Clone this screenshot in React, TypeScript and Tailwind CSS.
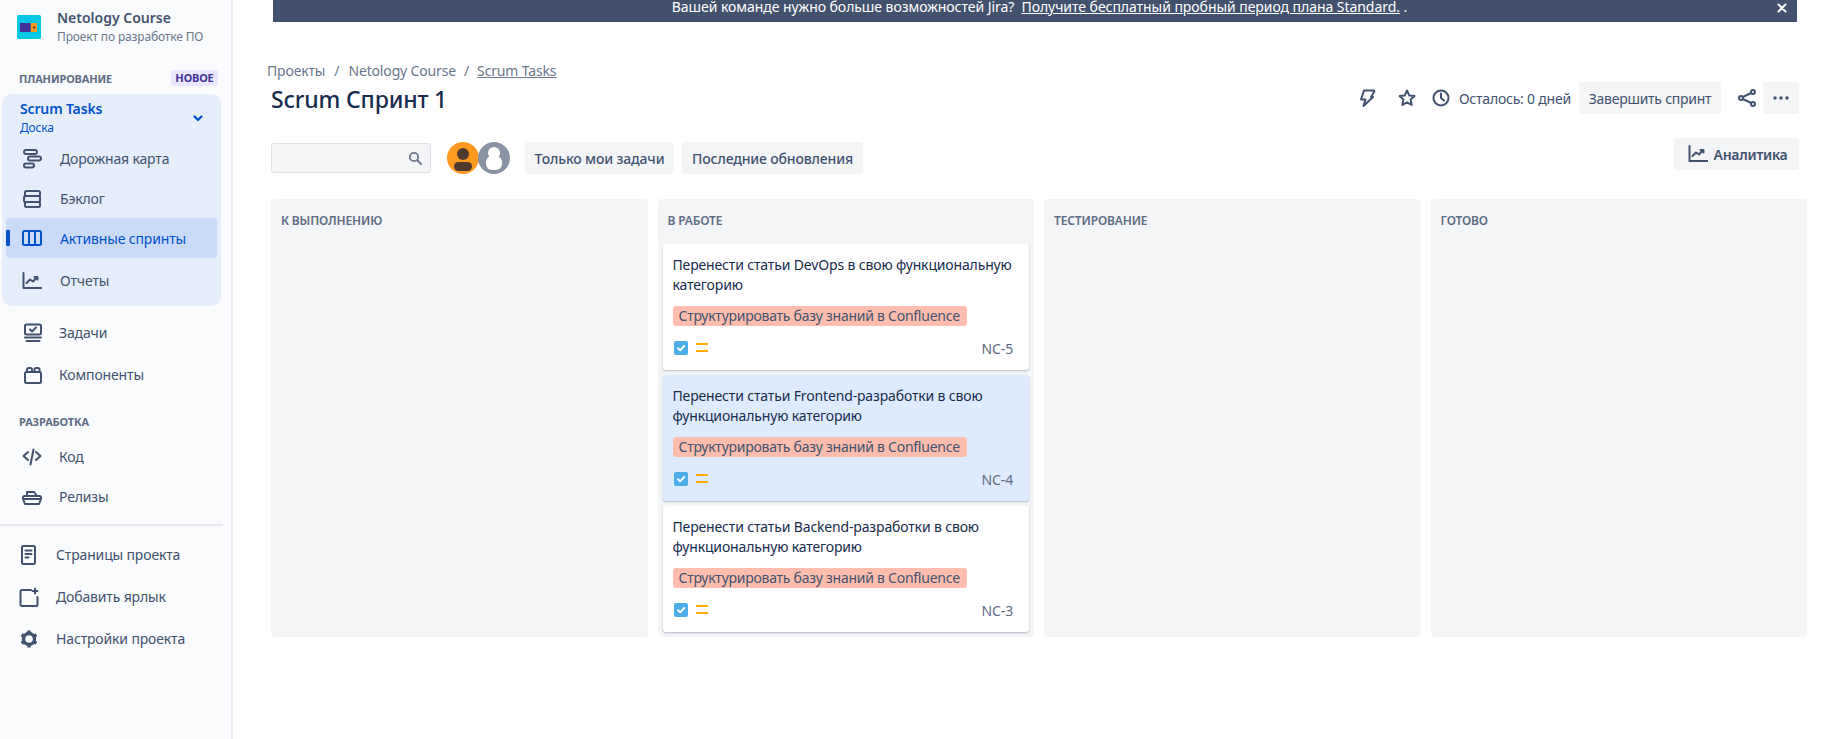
import React from "react";

const S = { fill: "none", stroke: "currentColor", strokeWidth: 2, strokeLinecap: "round" as const, strokeLinejoin: "round" as const };
const Ic = ({ children, className = "" }: { children: React.ReactNode; className?: string }) => (
  <svg viewBox="0 0 20 20" className={"w-5 h-5 shrink-0 " + className} {...S}>{children}</svg>
);
const Roadmap = () => <Ic><rect x="2" y="1" width="13" height="4" rx="2"/><rect x="6" y="7.500" width="13" height="4" rx="2"/><rect x="2" y="14.500" width="10" height="4" rx="2"/></Ic>;
const Backlog = () => <Ic><rect x="3" y="2" width="15" height="5" rx="1.500"/><rect x="2" y="7" width="16" height="6" rx="1.500"/><rect x="3" y="13" width="15" height="5" rx="1.500"/></Ic>;
const Board = () => <Ic><rect x="1" y="3" width="18" height="14" rx="1.500"/><path d="M7 3v14M13 3v14"/></Ic>;
const Chart = () => <Ic><path d="M1.500 2v15h18"/><path d="M4.500 12l3.500-3.500 3 2 4-4.500M12.500 6h3v2.500"/></Ic>;
const Tasks = () => <Ic><rect x="2" y="1.500" width="16" height="10" rx="1.500"/><path d="M7 6.500l2 2 4-4M2 14.500h16M3.500 18h13"/></Ic>;
const Comps = () => <Ic><rect x="2" y="7" width="16" height="11" rx="1.500"/><path d="M4 7V4.500A1.500 1.500 0 0 1 5.500 3h2A1.500 1.500 0 0 1 9 4.500V7M11.500 7V4.500A1.500 1.500 0 0 1 13 3h2a1.500 1.500 0 0 1 1.500 1.500V7"/></Ic>;
const Code = () => <Ic><path d="M6 5L1.500 9l4.500 4M14 5l4.500 4-4.500 4M11.500 2.500l-3 15"/></Ic>;
const Ship = () => <Ic><path d="M1 12h18l-2 5H3zM1 12v-1.500A1.500 1.500 0 0 1 2.500 9h15a1.500 1.500 0 0 1 1.500 1.500V12M5 9V5h7l3 4"/></Ic>;
const Page = () => <Ic><rect x="3" y="1" width="13" height="18" rx="1.500"/><path d="M6.500 5.500h6M6.500 9h6M6.500 12.500h3"/></Ic>;
const AddLink = () => <Ic><path d="M12 3H3a1.500 1.500 0 0 0-1.500 1.500v13A1.500 1.500 0 0 0 3 19h14a1.500 1.500 0 0 0 1.500-1.500V10M16 1.500v5M13.500 4h5"/></Ic>;
const Gear = () => (
  <svg viewBox="0 0 20 20" className="w-5 h-5 shrink-0" fill="none" stroke="currentColor" strokeWidth={3.4} strokeLinejoin="round">
    <circle cx="10" cy="10" r="5.500"/><path d="M10 1.500v3M10 15.500v3M2.600 5.700l2.600 1.500M14.800 12.800l2.600 1.500M2.600 14.300l2.600-1.500M14.800 7.200l2.600-1.500"/>
  </svg>
);
const Bolt = () => <Ic><path d="M7 2.500h9.500c.8 0 1 .6.700 1.300L14 9h2l-9.500 9 2-6.500H4z"/></Ic>;
const Star = () => <Ic><path d="M10 2.500l2.300 5 5.200.6-3.900 3.500 1.100 5.400L10 14.300 5.300 17l1.100-5.400L2.500 8.100l5.200-.6z"/></Ic>;
const Clock = () => <Ic><circle cx="10" cy="10" r="7.500"/><path d="M10 5.500V10l3 2.500"/></Ic>;
const Share = () => <Ic><circle cx="16" cy="4" r="2"/><circle cx="16" cy="16" r="2"/><circle cx="4" cy="10" r="2"/><path d="M14.200 5L5.800 9M14.200 15L5.800 11"/></Ic>;

const Row = ({ icon, label, h, gap, color = "text-[#42526e]", bg = "", mark = false, cls = "", pb = "pb-[2px]" }: any) => (
  <div className={`relative flex items-center ${h} ${gap} ${color} ${bg} ${cls} rounded-[4px]`}>
    {mark && <span className="absolute left-0 top-[12px] h-[16px] w-[4px] bg-[#0052cc] rounded-[1px]" />}
    {icon}
    <span className={`text-[14px] whitespace-nowrap ${pb}`}>{label}</span>
  </div>
);

const Sidebar = () => (
  <aside className="w-[233px] shrink-0 h-full bg-[#fafbfc] border-r-2 border-[#ebecf0] text-[#42526e]">
    <div className="flex items-start h-[66px] pl-[17px] gap-[16px]">
      <div className="mt-[15px] w-6 h-6 rounded-[2px] bg-[#00c7e6] flex items-center justify-center">
        <svg viewBox="0 0 20 10" className="w-[18px] h-[9px]">
          <rect width="12" height="10" fill="#403294" />
          <rect x="12" width="7" height="10" fill="#ff991f" />
          <path d="M14.500 5h2.500M15.750 3.700v2.600" stroke="#172b4d" strokeWidth="1" />
        </svg>
      </div>
      <div className="mt-[8px]">
        <div className="text-[14px] leading-[20px] font-semibold whitespace-nowrap tracking-normal">Netology Course</div>
        <div className="text-[12px] leading-[16px] mt-[1px] text-[#6b778c] whitespace-nowrap">Проект по разработке ПО</div>
      </div>
    </div>
    <div className="flex items-center justify-between h-[24px] pl-[19px] pr-[13px]">
      <span className="text-[11px] font-bold text-[#5e6c84] pt-[3px]">ПЛАНИРОВАНИЕ</span>
      <span className="h-[16px] w-[47px] flex items-center justify-center rounded-[3px] bg-[#eae6ff] text-[#403294] text-[11px] font-bold">НОВОЕ</span>
    </div>
    <div className="mt-[4px] ml-[2px] w-[219px] h-[212px] rounded-[10px] bg-[#e6eefb] px-[4px]">
      <div className="flex items-center justify-between h-[45px] pl-[14px] pr-[13px]">
        <div className="pt-[3px]">
          <div className="text-[14px] leading-[18px] font-semibold text-[#0052cc]">Scrum Tasks</div>
          <div className="text-[12px] leading-[16px] mt-[2px] text-[#0052cc]">Доска</div>
        </div>
        <svg viewBox="0 0 12 12" className="w-3 h-3 text-[#0052cc] mt-[3px]" fill="none" stroke="currentColor" strokeWidth="2.200" strokeLinecap="round" strokeLinejoin="round"><path d="M2.500 4.500L6 8l3.500-3.500"/></svg>
      </div>
      <Row icon={<Roadmap />} label="Дорожная карта" h="h-[40px]" gap="gap-[18px]" cls="pl-[16px]" />
      <Row icon={<Backlog />} label="Бэклог" h="h-[39px]" gap="gap-[18px]" cls="pl-[16px]" pb="pb-0" />
      <Row icon={<Board />} label="Активные спринты" h="h-[40px]" gap="gap-[18px]" color="text-[#0052cc]" bg="bg-[#c9dbf8]" mark cls="pl-[16px]" pb="pb-0" />
      <Row icon={<Chart />} label="Отчеты" h="h-[40px]" gap="gap-[18px]" cls="pl-[16px] mt-[3px]" />
    </div>
    <div className="mt-[6px] pl-[23px]">
      <Row icon={<Tasks />} label="Задачи" h="h-[42px]" gap="gap-[16px]" />
      <Row icon={<Comps />} label="Компоненты" h="h-[42px]" gap="gap-[16px]" />
    </div>
    <div className="h-[20px] mt-[16px] pl-[19px] flex items-center text-[11px] font-bold text-[#5e6c84]">РАЗРАБОТКА</div>
    <div className="pl-[22px] mt-[5px]">
      <Row icon={<Code />} label="Код" h="h-[40px]" gap="gap-[17px]" />
      <Row icon={<Ship />} label="Релизы" h="h-[40px]" gap="gap-[17px]" />
    </div>
    <div className="h-[2px] w-[223px] bg-[#e6e8ec] mt-[7px]" />
    <div className="pl-[19px] mt-[8px]">
      <Row icon={<Page />} label="Страницы проекта" h="h-[42px]" gap="gap-[17px]" />
      <Row icon={<AddLink />} label="Добавить ярлык" h="h-[42px]" gap="gap-[17px]" />
      <Row icon={<Gear />} label="Настройки проекта" h="h-[42px]" gap="gap-[17px]" />
    </div>
  </aside>
);

const Btn = ({ children, cls = "" }: { children: React.ReactNode; cls?: string }) => (
  <div className={`h-[32px] flex items-center justify-center rounded-[3px] bg-[#f4f5f7] text-[14px] text-[#42526e] whitespace-nowrap ${cls}`}>{children}</div>
);

const Card = ({ title, id, bg = "bg-white" }: { title: string; id: string; bg?: string }) => (
  <div className={`h-[126px] rounded-[3px] ${bg} shadow-[0_1px_2px_rgba(9,30,66,0.28)] pt-[11px] pl-[10px] pr-[16px]`}>
    <div className="text-[14px] leading-[20px] h-[40px] text-[#172b4d]">{title}</div>
    <div className="mt-[11px] h-[20px] w-[294px] rounded-[3px] bg-[#ffbdad] px-[6px] text-[14px] leading-[20px] text-[#42526e] whitespace-nowrap tracking-[-0.25px]">Структурировать базу знаний в Confluence</div>
    <div className="mt-[12px] h-[20px] flex items-center justify-between">
      <div className="flex items-center pl-[1px] gap-[8px]">
        <svg viewBox="0 0 14 14" className="w-[14px] h-[14px]"><rect width="14" height="14" rx="2" fill="#4bade8"/><path d="M4 7.200l2.200 2.200L10.200 5" fill="none" stroke="#fff" strokeWidth="2" strokeLinecap="round" strokeLinejoin="round"/></svg>
        <svg viewBox="0 0 12 10" className="w-[12px] h-[10px]"><path d="M0 1h12M0 8h12" stroke="#ffab00" strokeWidth="2"/></svg>
      </div>
      <span className="text-[14px] text-[#5e6c84]">{id}</span>
    </div>
  </div>
);

const Col = ({ title, children }: { title: string; children?: React.ReactNode }) => (
  <div className="flex-1 min-w-0 rounded-[4px] bg-[#f4f5f7] px-[5px]">
    <div className="h-[45px] pl-[5px] flex items-center text-[12px] font-semibold text-[#5e6c84] pb-[1px]">{title}</div>
    <div className="flex flex-col gap-[5px]">{children}</div>
  </div>
);

const Avatar = ({ bg, fg, gray }: { bg: string; fg: string; gray?: boolean }) => (
  <svg viewBox="0 0 32 32" className="w-[32px] h-[32px] shrink-0">
    <circle cx="16" cy="16" r="16" fill={bg} />
    <circle cx="16" cy={gray ? 11 : 12} r="6" fill={fg} />
    {gray ? <rect x="8" y="14" width="16" height="14" rx="6" fill={fg} /> : <rect x="7" y="20" width="18" height="9" rx="4.500" fill={fg} />}
  </svg>
);

export default function App() {
  return (
    <div className="flex h-screen w-full overflow-hidden bg-white tracking-[-0.15px]" style={{ fontFamily: '"Noto Sans", sans-serif' }}>
      <Sidebar />
      <main className="flex-1 min-w-0">
        <div className="ml-[40px] mr-[41px] h-[22px] bg-[#42526e] text-white text-[14px] leading-[14px] flex items-start justify-center relative">
          <span className="pl-[9px] tracking-[-0.05px] whitespace-nowrap">Вашей команде нужно больше возможностей Jira?&nbsp; <span className="underline">Получите бесплатный пробный период плана Standard.</span> .</span>
          <svg viewBox="0 0 10 10" className="absolute right-[10px] top-[3px] w-[10px] h-[10px]"><path d="M1.500 1.500l7 7M8.500 1.500l-7 7" stroke="#fff" strokeWidth="2" strokeLinecap="round"/></svg>
        </div>
        <div className="pl-[38px] pr-[31px]">
          <div className="flex items-start justify-between mt-[38px] h-[54px]">
            <div>
              <div className="-ml-[4px] mt-[1px] text-[14px] leading-[20px] text-[#6b778c] whitespace-nowrap">
                Проекты<span className="mx-[9px]">/</span>Netology Course<span className="mx-[8px]">/</span><span className="underline">Scrum Tasks</span>
              </div>
              <div className="mt-[2px] text-[23px] leading-[32px] font-medium text-[#172b4d]">Scrum Спринт 1</div>
            </div>
            <div className="flex items-center mt-[22px] mr-[8px] text-[#42526e]">
              <Bolt />
              <span className="ml-[20px]"><Star /></span>
              <span className="ml-[14px]"><Clock /></span>
              <span className="ml-[8px] text-[14px] whitespace-nowrap tracking-[-0.2px]">Осталось: 0 дней</span>
              <Btn cls="ml-[8px] w-[142px] tracking-[-0.25px]">Завершить спринт</Btn>
              <span className="ml-[16px]"><Share /></span>
              <Btn cls="ml-[6px] w-[36px]">
                <svg viewBox="0 0 16 4" className="w-[16px] h-[4px]"><circle cx="2" cy="2" r="1.700" fill="#42526e"/><circle cx="8" cy="2" r="1.700" fill="#42526e"/><circle cx="14" cy="2" r="1.700" fill="#42526e"/></svg>
              </Btn>
            </div>
          </div>
          <div className="flex items-start justify-between mt-[24px] h-[48px] mr-[8px]">
            <div className="flex items-center mt-[4px]">
              <div className="w-[160px] h-[30px] rounded-[3px] bg-[#f4f5f7] border border-[#dfe1e6] flex items-center justify-end pr-[8px] text-[#6b778c]">
                <svg viewBox="0 0 14 14" className="w-[14px] h-[14px]" fill="none" stroke="currentColor" strokeWidth="1.800" strokeLinecap="round"><circle cx="6" cy="6" r="4.200"/><path d="M9.500 9.500L13 13"/></svg>
              </div>
              <div className="flex items-center ml-[16px]">
                <Avatar bg="#ff991f" fg="#4e3a2f" />
                <div className="-ml-[1px]"><Avatar bg="#8993a4" fg="#ffffff" gray /></div>
              </div>
              <Btn cls="ml-[15px] w-[149px] font-medium">Только мои задачи</Btn>
              <Btn cls="ml-[8px] w-[181px] font-medium">Последние обновления</Btn>
            </div>
            <Btn cls="w-[125px] font-semibold gap-[6px] tracking-[-0.25px] pl-[2px]"><Chart />Аналитика</Btn>
          </div>
          <div className="flex gap-[10px] h-[438px] mt-[13px]">
            <Col title="К ВЫПОЛНЕНИЮ" />
            <Col title="В РАБОТЕ">
              <Card title="Перенести статьи DevOps в свою функциональную категорию" id="NC-5" />
              <Card title="Перенести статьи Frontend-разработки в свою функциональную категорию" id="NC-4" bg="bg-[#deebff]" />
              <Card title="Перенести статьи Backend-разработки в свою функциональную категорию" id="NC-3" />
            </Col>
            <Col title="ТЕСТИРОВАНИЕ" />
            <Col title="ГОТОВО" />
          </div>
        </div>
      </main>
    </div>
  );
}
